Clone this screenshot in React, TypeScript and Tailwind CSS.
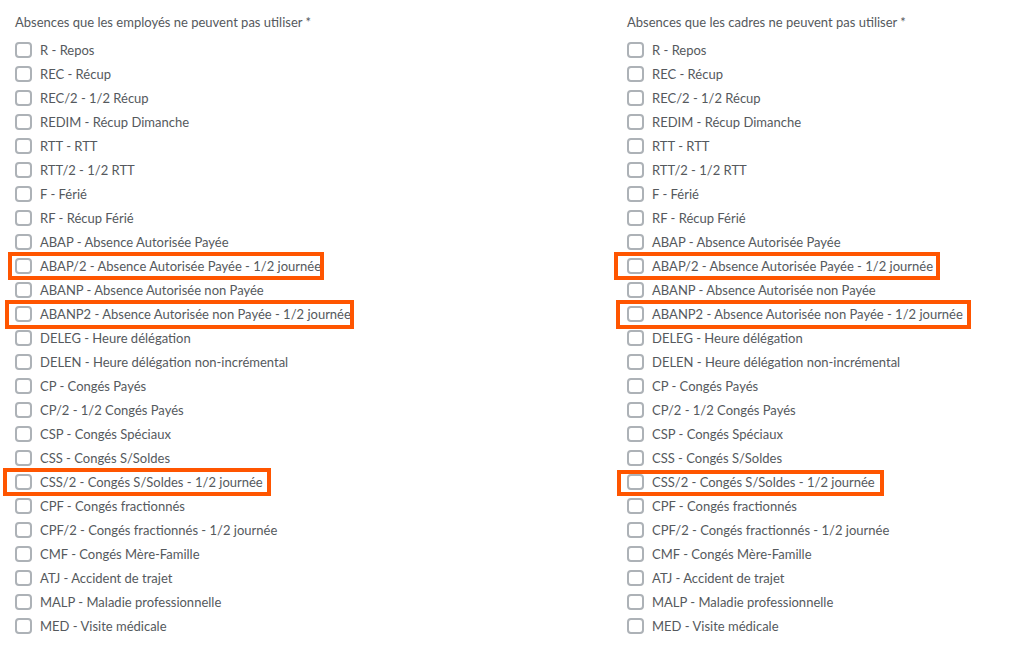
import React from "react";

const items = [
  "R - Repos",
  "REC - Récup",
  "REC/2 - 1/2 Récup",
  "REDIM - Récup Dimanche",
  "RTT - RTT",
  "RTT/2 - 1/2 RTT",
  "F - Férié",
  "RF - Récup Férié",
  "ABAP - Absence Autorisée Payée",
  "ABAP/2 - Absence Autorisée Payée - 1/2 journée",
  "ABANP - Absence Autorisée non Payée",
  "ABANP2 - Absence Autorisée non Payée - 1/2 journée",
  "DELEG - Heure délégation",
  "DELEN - Heure délégation non-incrémental",
  "CP - Congés Payés",
  "CP/2 - 1/2 Congés Payés",
  "CSP - Congés Spéciaux",
  "CSS - Congés S/Soldes",
  "CSS/2 - Congés S/Soldes - 1/2 journée",
  "CPF - Congés fractionnés",
  "CPF/2 - Congés fractionnés - 1/2 journée",
  "CMF - Congés Mère-Famille",
  "ATJ - Accident de trajet",
  "MALP - Maladie professionnelle",
  "MED - Visite médicale",
];

const leftBoxes: Record<number, string> = {
  9: "-left-[7px] -right-[3px] -top-[2px] -bottom-[2px]",
  11: "-left-[10px] -right-[3px] -top-[2px] -bottom-[3px]",
  18: "-left-[12px] -right-[8px] -top-[2px] -bottom-[2px]",
};

const rightBoxes: Record<number, string> = {
  9: "-left-[13px] -right-[7px] -top-[2px] -bottom-[2px]",
  11: "-left-[11px] -right-[8px] -top-[2px] -bottom-[3px]",
  18: "-left-[10px] -right-[9px] top-0 -bottom-[2px]",
};

function Column({ title, boxes }: { title: string; boxes: Record<number, string> }) {
  return (
    <div className="flex flex-col">
      <div className="h-[38px] pt-[14px] text-[13px] leading-[16px]">{title}</div>
      <div className="flex flex-col">
        {items.map((label, i) => (
          <div key={label} className="flex h-[24px] items-center">
            <label className="relative inline-flex h-[24px] items-center gap-[8px]">
              <span className="h-[16px] w-[17px] rounded-[4px] border-2 border-[#adb2b7] bg-white" />
              <span className="text-[13px] leading-[16px]">{label}</span>
              {boxes[i] && (
                <span
                  className={
                    "pointer-events-none absolute border-[4px] border-[#ff5500] " + boxes[i]
                  }
                />
              )}
            </label>
          </div>
        ))}
      </div>
    </div>
  );
}

export default function App() {
  return (
    <div
      className="grid h-[655px] w-[1015px] grid-cols-[612px_1fr] bg-white pl-[15px] text-[#55595d]"
      style={{ fontFamily: "Lato, 'Open Sans', sans-serif" }}
    >
      <Column title="Absences que les employés ne peuvent pas utiliser *" boxes={leftBoxes} />
      <Column title="Absences que les cadres ne peuvent pas utiliser *" boxes={rightBoxes} />
    </div>
  );
}
